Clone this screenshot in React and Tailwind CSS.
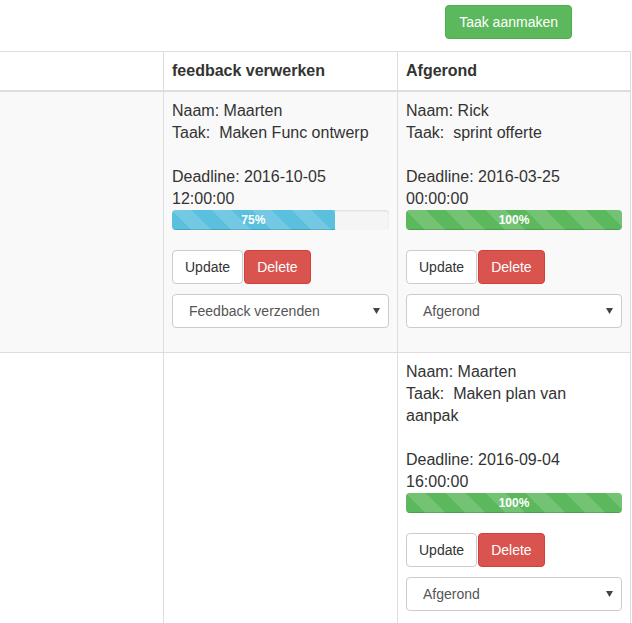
import React from "react";

const stripes =
  "bg-[linear-gradient(45deg,rgba(255,255,255,.15)_25%,transparent_25%,transparent_50%,rgba(255,255,255,.15)_50%,rgba(255,255,255,.15)_75%,transparent_75%,transparent)] bg-size-[40px_40px]";

function Progress({ value, color }) {
  return (
    <div className="h-[20px] w-full rounded-[4px] bg-[#f5f5f5] shadow-[inset_0_1px_2px_rgba(0,0,0,0.1)] overflow-hidden flex">
      <div
        className={`${color} ${stripes} h-full text-center text-[12px] leading-[20px] font-bold text-white shadow-[inset_0_-1px_0_rgba(0,0,0,0.15)]`}
        style={{ width: `${value}%` }}
      >
        {value}%
      </div>
    </div>
  );
}

function Task({ naam, taak, date, time, value, color, status }) {
  return (
    <div>
      <div className="text-[16px] leading-[22px]">
        Naam: {naam}
        <br />
        {taak}
        <br />
        <br />
        Deadline: {date}
        <br />
        {time}
      </div>
      <Progress value={value} color={color} />
      <div className="flex mt-[20px]">
        <button className="h-[34px] px-[12px] border border-[#ccc] bg-white rounded-[4px] text-[14px] leading-[20px] text-[#333]">
          Update
        </button>
        <button className="h-[34px] px-[12px] ml-px border border-[#d43f3a] bg-[#d9534f] rounded-[4px] text-[14px] leading-[20px] text-white">
          Delete
        </button>
      </div>
      <div className="mt-[10px] mb-[16px] h-[34px] flex items-center justify-between border border-[#ccc] rounded-[4px] bg-white pl-[16px] pr-[8px] text-[14px] text-[#555]">
        <span>{status}</span>
        <svg width="7" height="6" viewBox="0 0 7 6">
          <path d="M0 0 H7 L3.5 6 Z" fill="#444" />
        </svg>
      </div>
    </div>
  );
}

export default function App() {
  return (
    <div className="w-[632px] h-[623px] overflow-hidden bg-white text-[#333] font-['Liberation_Sans',Arial,sans-serif]">
      {/* top bar */}
      <div className="flex justify-end pr-[60px] pt-[5px]">
        <button className="h-[34px] px-[13px] border border-[#4cae4c] bg-[#5cb85c] rounded-[4px] text-[14px] leading-[20px] text-white">
          Taak aanmaken
        </button>
      </div>

      {/* table */}
      <div className="mt-[12px] w-[631px] border-t border-[#ddd]">
        {/* header */}
        <div className="flex border-b-2 border-[#ddd] text-[16px] leading-[22px] font-bold">
          <div className="w-[164px] border-r border-[#ddd] p-[8px]"></div>
          <div className="w-[234px] border-r border-[#ddd] p-[8px]">feedback verwerken</div>
          <div className="w-[233px] border-r border-[#ddd] p-[8px]">Afgerond</div>
        </div>

        {/* row 1 */}
        <div className="flex bg-[#f9f9f9] border-b border-[#ddd]">
          <div className="w-[164px] border-r border-[#ddd] p-[8px]"></div>
          <div className="w-[234px] border-r border-[#ddd] p-[8px]">
            <Task
              naam="Maarten"
              taak={"Taak:\u00a0 Maken Func ontwerp"}
              date="2016-10-05"
              time="12:00:00"
              value={75}
              color="bg-[#5bc0de]"
              status="Feedback verzenden"
            />
          </div>
          <div className="w-[233px] border-r border-[#ddd] p-[8px]">
            <Task
              naam="Rick"
              taak={"Taak:\u00a0 sprint offerte"}
              date="2016-03-25"
              time="00:00:00"
              value={100}
              color="bg-[#5cb85c]"
              status="Afgerond"
            />
          </div>
        </div>

        {/* row 2 */}
        <div className="flex border-b border-[#ddd]">
          <div className="w-[164px] border-r border-[#ddd] p-[8px]"></div>
          <div className="w-[234px] border-r border-[#ddd] p-[8px]"></div>
          <div className="w-[233px] border-r border-[#ddd] p-[8px]">
            <Task
              naam="Maarten"
              taak={
                <>
                  {"Taak:\u00a0 Maken plan van"}
                  <br />
                  aanpak
                </>
              }
              date="2016-09-04"
              time="16:00:00"
              value={100}
              color="bg-[#5cb85c]"
              status="Afgerond"
            />
          </div>
        </div>
      </div>
    </div>
  );
}
